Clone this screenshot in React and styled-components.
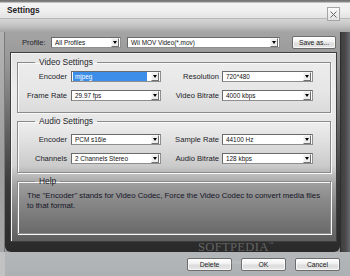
import React from "react";
import styled, { createGlobalStyle } from "styled-components";

const GlobalStyle = createGlobalStyle`
  html, body {
    margin: 0;
    padding: 0;
    overflow: hidden;
    background: #9a9a9a;
  }
  body {
    font-family: "Liberation Sans", Arial, sans-serif;
  }
  * {
    box-sizing: border-box;
  }
`;

const Window = styled.div`
  position: relative;
  width: 350px;
  height: 276px;
  display: flex;
  flex-direction: column;
  overflow: hidden;
`;

const TitleBar = styled.div`
  flex: none;
  height: 18px;
  display: flex;
  justify-content: space-between;
  padding: 0 10px 0 7px;
  background: linear-gradient(#6e6e6e 0, #8a8a8a 2px, #f4f4f4 3px, #efefef 60%, #e3e3e3 100%);
`;

const Title = styled.span`
  margin-top: 6px;
  font-size: 8.3px;
  line-height: 9px;
  font-weight: bold;
  color: #222;
`;

const CloseButton = styled.div`
  position: relative;
  z-index: 1;
  margin-top: 7px;
  width: 13px;
  height: 14px;
  display: flex;
  align-items: center;
  justify-content: center;
  border: 1px solid #a4a4a4;
  background: linear-gradient(#fafafa, #e2e2e2);
`;

const Band = styled.div`
  flex: none;
  height: 14px;
  border-top: 1px solid #b8b8b8;
  background: linear-gradient(#d6d6d6 0%, #c4c4c4 50%, #a4a4a4 100%);
`;

const BodyRow = styled.div`
  flex: none;
  height: 220px;
  display: flex;
`;

const LeftEdge = styled.div`
  width: 5px;
  border-right: 1px solid #7a7a7a;
  background: linear-gradient(#b4b4b4, #9c9c9c 60%, #a8a8a8);
`;

const RightEdge = styled.div`
  width: 10px;
  border-left: 1px solid #2e2e2e;
  background: linear-gradient(90deg, #3e3e3e 0, #4a4a4a 50%, #66686e 100%);
`;

const Body = styled.div`
  flex: 1;
  display: flex;
  flex-direction: column;
  padding: 0 3px 10px 4px;
  border-radius: 0 0 6px 6px;
  background: linear-gradient(#a4a4a4 0%, #969696 15%, #6a6a6a 40%, #3a3a3a 70%, #2a2a2a 100%);
`;

const ProfileRow = styled.div`
  flex: none;
  height: 20px;
  display: flex;
  align-items: center;
  padding: 1px 0 0 13px;
`;

const ProfileLabel = styled.span`
  width: 29px;
  font-size: 7.6px;
  color: #1e1e2a;
`;

const Label = styled.span`
  font-size: 7.6px;
  line-height: 11px;
  color: #1e1e2a;
  text-align: right;
  padding-right: ${(p) => p.$pad || 4}px;
  white-space: nowrap;
`;

const SelectBox = styled.div`
  width: ${(p) => (p.$w ? `${p.$w}px` : "auto")};
  height: 11px;
  display: flex;
  align-items: center;
  padding: 0 1px;
  background: #fff;
  border: 1px solid #8e8e8e;
  border-top-color: #6a6a6a;
  border-left-color: #6a6a6a;
  margin-right: ${(p) => p.$mr || 0}px;
`;

const SelectText = styled.span`
  flex: 1;
  height: 9px;
  display: flex;
  align-items: center;
  padding-left: 2px;
  margin-right: ${(p) => (p.$active ? 4 : 0)}px;
  font-size: 6.4px;
  color: ${(p) => (p.$active ? "#fff" : "#111")};
  background: ${(p) => (p.$active ? "#3d8ee8" : "transparent")};
  white-space: nowrap;
  overflow: hidden;
`;

const Arrow = styled.span`
  flex: none;
  width: 8px;
  height: 9px;
  display: flex;
  align-items: center;
  justify-content: center;
  background: #eeeeee;
  border: 1px solid #f8f8f8;
  border-right-color: #707070;
  border-bottom-color: #707070;
  &::after {
    content: "";
    border-left: 2.5px solid transparent;
    border-right: 2.5px solid transparent;
    border-top: 3px solid #000;
  }
`;

const Button = styled.div`
  width: ${(p) => p.$w || 45}px;
  height: ${(p) => p.$h || 13}px;
  display: flex;
  align-items: center;
  justify-content: center;
  font-size: 6.8px;
  color: #1a1a1a;
  border: 1px solid #6c6c6c;
  border-radius: 2px;
  background: linear-gradient(#ffffff 0%, #f0f0f0 45%, #dcdcdc 55%, #e6e6e6 100%);
  box-shadow: inset 0 0 0 1px rgba(255, 255, 255, 0.7);
`;

const Frame = styled.div`
  flex: 1;
  display: flex;
  flex-direction: column;
  gap: 3px;
  margin-left: 1px;
  padding: 4px 5px 7px 6px;
  border: 1px solid #3e3e3e;
  box-shadow: inset 1px 1px 0 #f6f6f6;
  background: linear-gradient(
    #e4e4e4 0%,
    #ececec 20%,
    #e6e6e6 40%,
    #d4d4d4 60%,
    #a4a4a4 70%,
    #7a7a7a 86%,
    #5e5e5e 100%
  );
`;

const Group = styled.fieldset`
  margin: 0;
  min-width: 0;
  padding: ${(p) => p.$pt}px 0 ${(p) => p.$pb}px 0;
  border: 1px solid #8a8a8a;
  box-shadow: inset 1px 1px 0 #fafafa, 1px 1px 0 #fafafa;
  flex: ${(p) => (p.$grow ? 1 : "none")};
  background: ${(p) =>
    p.$dark
      ? "linear-gradient(#a0a0a0 0%, #8a8a8a 35%, #6a6a6a 100%)"
      : "linear-gradient(rgba(255,255,255,0.25), rgba(0,0,0,0.06))"};
`;

const Legend = styled.legend`
  margin-left: 17px;
  padding: 0 4px;
  font-size: 8.4px;
  line-height: 10px;
  color: #1e1e2a;
`;

const FieldGrid = styled.div`
  display: grid;
  grid-template-columns: 53px 90px 61px 91px;
  grid-auto-rows: 11px;
  row-gap: 8px;
`;

const HelpText = styled.p`
  margin: 0;
  padding: 5px 4px 0 9px;
  font-size: 7.8px;
  line-height: 10px;
  color: #141428;
`;

const Footer = styled.div`
  flex: 1;
  display: flex;
  justify-content: flex-end;
  align-items: center;
  gap: 9px;
  padding: 1px 10px 0 0;
  border-left: 5px solid #c2c2c2;
  background: linear-gradient(#b4b7ba, #aeb1b4);
`;

const Watermark = styled.div`
  position: absolute;
  left: 198px;
  top: 240px;
  font-family: "Liberation Serif", "Times New Roman", serif;
  font-size: 12.6px;
  letter-spacing: 0.3px;
  color: rgba(255, 255, 255, 0.28);
  pointer-events: none;
`;

const Tm = styled.sup`
  font-size: 5px;
  vertical-align: 6px;
`;

const WatermarkUrl = styled.div`
  position: absolute;
  left: 216px;
  top: 259px;
  font-size: 5px;
  color: rgba(255, 255, 255, 0.22);
  pointer-events: none;
`;

const Select = ({ w, mr, value, active }) => (
  <SelectBox $w={w} $mr={mr}>
    <SelectText $active={active}>{value}</SelectText>
    <Arrow />
  </SelectBox>
);

const videoFields = [
  ["Encoder", "mjpeg", true, "Resolution", "720*480"],
  ["Frame Rate", "29.97 fps", false, "Video Bitrate", "4000 kbps"],
];

const audioFields = [
  ["Encoder", "PCM s16le", false, "Sample Rate", "44100 Hz"],
  ["Channels", "2 Channels Stereo", false, "Audio Bitrate", "128 kbps"],
];

const Fields = ({ rows }) => (
  <FieldGrid>
    {rows.map(([l1, v1, active, l2, v2]) => (
      <React.Fragment key={l1}>
        <Label>{l1}</Label>
        <Select value={v1} active={active} />
        <Label $pad={3}>{l2}</Label>
        <Select value={v2} />
      </React.Fragment>
    ))}
  </FieldGrid>
);

export default function App() {
  return (
    <>
      <GlobalStyle />
      <Window>
        <TitleBar>
          <Title>Settings</Title>
          <CloseButton>
            <svg width="9" height="9" viewBox="0 0 9 9">
              <path d="M1.5 1.5L7.5 7.5M7.5 1.5L1.5 7.5" stroke="#666" strokeWidth="1" fill="none" />
            </svg>
          </CloseButton>
        </TitleBar>
        <Band />
        <BodyRow>
          <LeftEdge />
          <Body>
            <ProfileRow>
              <ProfileLabel>Profile:</ProfileLabel>
              <Select w={70} mr={6} value="All Profiles" />
              <Select w={153} mr={12} value="Wii MOV Video(*.mov)" />
              <Button $w={44} $h={13}>Save as...</Button>
            </ProfileRow>
            <Frame>
              <Group $pt={4} $pb={11}>
                <Legend>Video Settings</Legend>
                <Fields rows={videoFields} />
              </Group>
              <Group $pt={8} $pb={8}>
                <Legend>Audio Settings</Legend>
                <Fields rows={audioFields} />
              </Group>
              <Group $pt={0} $pb={0} $grow $dark>
                <Legend>Help</Legend>
                <HelpText>
                  The "Encoder" stands for Video Codec, Force the Video Codec to convert media files
                  <br />
                  to that format.
                </HelpText>
              </Group>
            </Frame>
          </Body>
          <RightEdge />
        </BodyRow>
        <Footer>
          <Button>Delete</Button>
          <Button>OK</Button>
          <Button>Cancel</Button>
        </Footer>
        <Watermark>
          SOFTPEDIA<Tm>™</Tm>
        </Watermark>
        <WatermarkUrl>www.softpedia.com</WatermarkUrl>
      </Window>
    </>
  );
}
